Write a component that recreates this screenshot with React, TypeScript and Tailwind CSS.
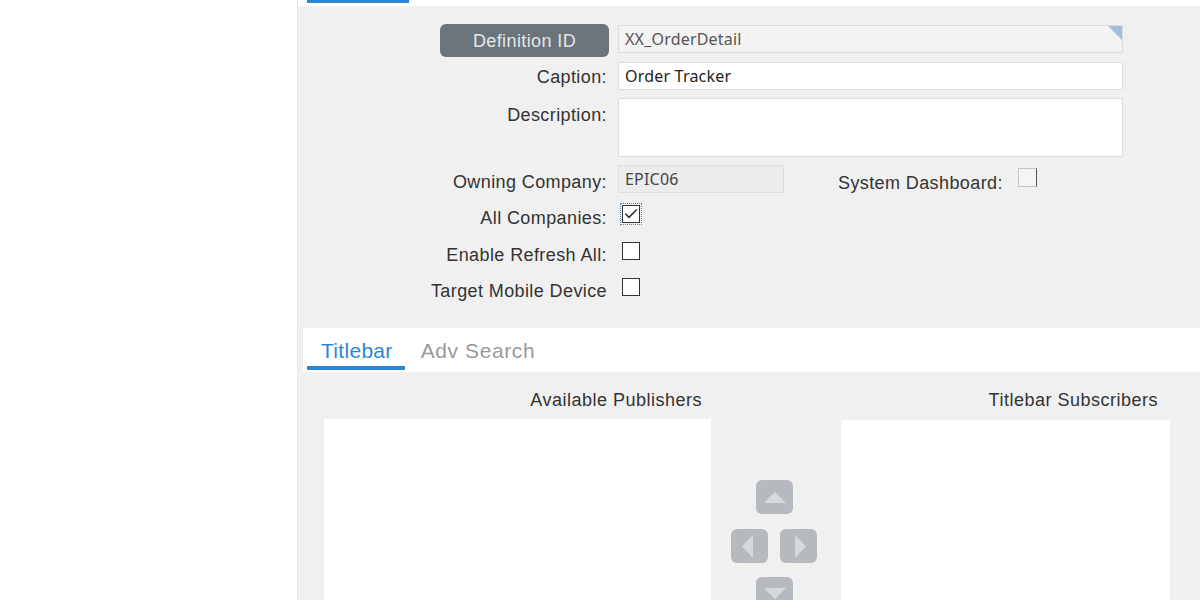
import { Check } from "lucide-react";

const label = "font-['Liberation_Sans',Arial,sans-serif] text-[18px] leading-[20px] tracking-[0.4px] text-[#333]";
const value = "font-['Noto_Sans',sans-serif] text-[16px] tracking-[0.2px]";

function Box({ checked = false, focused = false }: { checked?: boolean; focused?: boolean }) {
  return (
    <div
      className={
        focused
          ? "p-[1px] outline outline-1 outline-dotted outline-[#4f86c6]"
          : "p-[1px]"
      }
    >
      <div className="w-[18px] h-[18px] bg-white border border-[#333] flex items-center justify-center">
        {checked && <Check className="w-[16px] h-[16px] text-[#333]" strokeWidth={2.4} />}
      </div>
    </div>
  );
}

// transfer buttons between the two lists
function Arrow({ dir }: { dir: "up" | "down" | "left" | "right" }) {
  const pts = {
    up: "8,23 19,12 30,23",
    down: "8,11 19,22 30,11",
    left: "22,6 11,17.5 22,29",
    right: "15,6 26,17.5 15,29",
  }[dir];
  return (
    <svg width="37" height="34" viewBox="0 0 37 34" className="block">
      <rect x="0" y="0" width="37" height="34" rx="6" fill="#b6babe" />
      <polygon points={pts} fill="#d6d9dc" />
    </svg>
  );
}

export default function App() {
  return (
    <div className="flex w-full h-[600px] overflow-hidden bg-white">
      <div className="w-[297px] shrink-0 bg-white" />

      <div className="flex-1 flex flex-col bg-[#f0f0f0] border-l border-[#e6e6e6]">
        {/* Top tab remnant */}
        <div className="h-[6px] shrink-0 bg-white">
          <div className="ml-[9px] w-[102px] h-[3px] bg-[#2b87d1]" />
        </div>

        {/* Definition form */}
        <div className="h-[322px] shrink-0 pt-[18px] flex flex-col">
          <div className="flex h-[33px]">
            <div className="w-[311px] shrink-0 flex justify-end">
              <div className={`w-[169px] h-[33px] rounded-[6px] bg-[#6b747b] flex items-center justify-center ${label} tracking-[0.2px] text-[#e4e6e8]`}>
                Definition ID
              </div>
            </div>
            <div className={`relative ml-[9px] mt-[1px] w-[505px] h-[28px] bg-[#f3f3f3] border border-[#dcdcdc] px-[6px] flex items-center ${value} text-[#555]`}>
              XX_OrderDetail
              <svg className="absolute top-0 right-0" width="14" height="14" viewBox="0 0 14 14">
                <polygon points="0,0 14,0 14,14" fill="#a7bdd6" />
              </svg>
            </div>
          </div>

          <div className="flex items-center h-[28px] mt-[5px]">
            <div className={`w-[311px] shrink-0 text-right pr-[2px] pt-[2px] ${label}`}>Caption:</div>
            <div className={`ml-[9px] w-[505px] h-[28px] bg-white border border-[#dcdcdc] px-[6px] flex items-center ${value} text-[#222]`}>
              Order Tracker
            </div>
          </div>

          <div className="flex h-[59px] mt-[8px]">
            <div className={`w-[311px] shrink-0 text-right pr-[2px] pt-[7px] ${label}`}>Description:</div>
            <div className="ml-[9px] w-[505px] h-[59px] bg-white border border-[#dcdcdc]" />
          </div>

          <div className="flex h-[35px] mt-[8px]">
            <div className={`w-[311px] shrink-0 text-right pr-[2px] pt-[7px] ${label}`}>Owning Company:</div>
            <div className={`ml-[9px] w-[166px] h-[28px] bg-[#ececec] border border-[#dedede] px-[6px] flex items-center ${value} text-[#444]`}>
              EPIC06
            </div>
            <div className={`ml-[54px] pt-[8px] ${label}`}>System Dashboard:</div>
            <div className="ml-[15px] mt-[3px] w-[19px] h-[19px] bg-[#f4f4f4] border border-[#c4c4c4] border-r-[#555]" />
          </div>

          <div className="flex h-[37px]">
            <div className={`w-[311px] shrink-0 text-right pr-[2px] pt-[8px] ${label}`}>All Companies:</div>
            <div className="ml-[12px] mt-[4px]">
              <Box checked focused />
            </div>
          </div>

          <div className="flex h-[37px]">
            <div className={`w-[311px] shrink-0 text-right pr-[2px] pt-[8px] ${label}`}>Enable Refresh All:</div>
            <div className="ml-[12px] mt-[4px]">
              <Box />
            </div>
          </div>

          <div className="flex h-[37px]">
            <div className={`w-[311px] shrink-0 text-right pr-[2px] pt-[7px] ${label}`}>Target Mobile Device</div>
            <div className="ml-[12px] mt-[3px]">
              <Box />
            </div>
          </div>
        </div>

        {/* Tabs */}
        <div className="h-[44px] shrink-0 ml-[5px] bg-white flex items-end gap-[14px] pl-[4px] font-['Liberation_Sans',Arial,sans-serif] text-[21px] leading-[24px]">
          <div className="flex flex-col">
            <span className="px-[14px] text-[#2b87d1] tracking-[0.3px]">Titlebar</span>
            <div className="mt-[3px] h-[4px] w-[98px] bg-[#2b87d1] mb-[2px]" />
          </div>
          <span className="text-[#9a9a9a] pb-[9px] tracking-[0.6px]">Adv Search</span>
        </div>

        {/* Publisher / subscriber lists */}
        <div className="flex-1 flex pl-[26px]">
          <div className="w-[387px] flex flex-col">
            <div className={`h-[47px] pt-[18px] text-right pr-[9px] ${label} text-[#222] tracking-[0.5px]`}>
              Available Publishers
            </div>
            <div className="flex-1 bg-white" />
          </div>

          <div className="w-[130px] flex flex-col items-center pt-[108px] pr-[4px]">
            <Arrow dir="up" />
            <div className="flex gap-[12px] mt-[15px]">
              <Arrow dir="left" />
              <Arrow dir="right" />
            </div>
            <div className="mt-[14px]">
              <Arrow dir="down" />
            </div>
          </div>

          <div className="w-[329px] flex flex-col">
            <div className={`h-[48px] pt-[18px] text-right pr-[12px] ${label} text-[#222] tracking-[0.5px]`}>
              Titlebar Subscribers
            </div>
            <div className="flex-1 bg-white" />
          </div>
        </div>
      </div>
    </div>
  );
}
